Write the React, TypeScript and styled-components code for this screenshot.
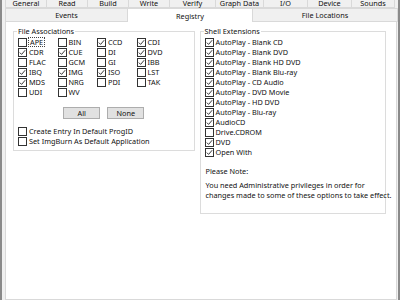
import React from 'react';
import styled, { createGlobalStyle } from 'styled-components';

const GlobalStyle = createGlobalStyle`
  html, body {
    margin: 0;
    padding: 0;
    overflow: hidden;
    background: #f0f0f0;
  }
  body {
    font-family: "Noto Sans", "Liberation Sans", sans-serif;
    font-size: 7.3px;
    color: #111;
  }
`;

const Window = styled.div`
  width: 400px;
  height: 300px;
  box-sizing: border-box;
  display: flex;
  flex-direction: column;
  background: #f0f0f0;
  border-left: 2px solid #8a8a8a;
  border-right: 2px solid #8a8a8a;
  padding-left: 3px;
  overflow: hidden;
`;

const TabRow = styled.div<{ $top?: number }>`
  display: flex;
  height: 14px;
  margin-top: ${(p) => p.$top ?? 0}px;
  flex-shrink: 0;
`;

const Tab = styled.div<{ $w: number; $active?: boolean; $low?: boolean }>`
  width: ${(p) => p.$w}px;
  box-sizing: border-box;
  display: flex;
  align-items: ${(p) => (p.$low ? 'flex-end' : 'center')};
  justify-content: center;
  line-height: ${(p) => (p.$low ? '7px' : 'normal')};
  background: ${(p) => (p.$active ? '#ffffff' : '#f0f0f0')};
  border: 1px solid #d9d9d9;
  border-bottom: ${(p) => (p.$active ? 'none' : '1px solid #d9d9d9')};
  margin-left: -1px;
  white-space: nowrap;
  &:first-child {
    margin-left: 0;
  }
`;

const Page = styled.div`
  flex: 1;
  display: flex;
  align-items: flex-start;
  gap: 5px;
  background: #ffffff;
  border: 1px solid #d9d9d9;
  border-top: none;
  margin-right: 1px;
  padding: 4px 10px 0 7px;
`;

const Group = styled.fieldset<{ $w: number; $pb: number }>`
  width: ${(p) => p.$w}px;
  box-sizing: border-box;
  margin: 0;
  min-width: 0;
  border: 1px solid #dcdcdc;
  padding: 0 4px ${(p) => p.$pb}px 4px;
`;

const Legend = styled.legend`
  padding: 0 1px;
  margin-left: -1px;
  line-height: 10px;
  font-size: 7.3px;
`;

const AssocGrid = styled.div`
  display: grid;
  grid-template-columns: repeat(4, 39.5px);
  grid-auto-rows: 10px;
  margin-top: 1px;
`;

const Item = styled.label`
  display: flex;
  align-items: center;
  gap: 2px;
  height: 10px;
  line-height: 10px;
  white-space: nowrap;
`;

const Box = styled.span`
  width: 9px;
  height: 9px;
  box-sizing: border-box;
  border: 1px solid #333;
  background: #fff;
  display: inline-flex;
  flex-shrink: 0;
`;

const Text = styled.span<{ $focus?: boolean }>`
  outline: ${(p) => (p.$focus ? '1px dotted #444' : 'none')};
  outline-offset: 0;
  padding: 0 ${(p) => (p.$focus ? '1px' : '0')};
  line-height: 8px;
`;

const Buttons = styled.div`
  display: flex;
  justify-content: center;
  gap: 7px;
  margin: 10px 0 7px;
`;

const Button = styled.button`
  width: 37px;
  height: 12px;
  padding: 0;
  font: inherit;
  color: #111;
  background: #e1e1e1;
  border: 1px solid #adadad;
`;

const List = styled.div`
  display: flex;
  flex-direction: column;
  margin-top: 1px;
`;

const Note = styled.p<{ $mt: number }>`
  margin: ${(p) => p.$mt}px 0 0 1px;
  line-height: 10px;
  white-space: nowrap;
`;

const Check = ({ checked, label, focus }: { checked?: boolean; label: string; focus?: boolean }) => (
  <Item>
    <Box>
      {checked && (
        <svg width="7" height="7" viewBox="0 0 7 7">
          <polyline points="0.8,3.6 2.6,5.4 6.2,1.2" fill="none" stroke="#222" strokeWidth="0.9" />
        </svg>
      )}
    </Box>
    <Text $focus={focus}>{label}</Text>
  </Item>
);

const topTabs: [string, number][] = [
  ['General', 42],
  ['Read', 42],
  ['Build', 42],
  ['Write', 42],
  ['Verify', 47],
  ['Graph Data', 49],
  ['I/O', 45],
  ['Device', 45],
  ['Sounds', 44],
];

const assoc: [string, boolean][] = [
  ['APE', false], ['BIN', false], ['CCD', true], ['CDI', true],
  ['CDR', true], ['CUE', true], ['DI', false], ['DVD', true],
  ['FLAC', false], ['GCM', false], ['GI', false], ['IBB', true],
  ['IBQ', true], ['IMG', true], ['ISO', true], ['LST', false],
  ['MDS', true], ['NRG', false], ['PDI', false], ['TAK', false],
  ['UDI', false], ['WV', false],
];

const shell: [string, boolean][] = [
  ['AutoPlay - Blank CD', true],
  ['AutoPlay - Blank DVD', true],
  ['AutoPlay - Blank HD DVD', true],
  ['AutoPlay - Blank Blu-ray', true],
  ['AutoPlay - CD Audio', true],
  ['AutoPlay - DVD Movie', true],
  ['AutoPlay - HD DVD', true],
  ['AutoPlay - Blu-ray', true],
  ['AudioCD', true],
  ['Drive.CDROM', false],
  ['DVD', true],
  ['Open With', true],
];

export default function App() {
  return (
    <>
      <GlobalStyle />
      <Window>
        <TabRow $top={-6}>
          {topTabs.map(([t, w]) => (
            <Tab key={t} $w={w} $low>{t}</Tab>
          ))}
        </TabRow>
        <TabRow>
          <Tab $w={123}>Events</Tab>
          <Tab $w={126} $active>Registry</Tab>
          <Tab $w={146}>File Locations</Tab>
        </TabRow>
        <Page>
          <Group $w={182} $pb={4}>
            <Legend>File Associations</Legend>
            <AssocGrid>
              {assoc.map(([n, c], i) => (
                <Check key={n} label={n} checked={c} focus={i === 0} />
              ))}
            </AssocGrid>
            <Buttons>
              <Button>All</Button>
              <Button>None</Button>
            </Buttons>
            <Check label="Create Entry In Default ProgID" />
            <Check label="Set ImgBurn As Default Application" />
          </Group>
          <Group $w={187} $pb={13}>
            <Legend>Shell Extensions</Legend>
            <List>
              {shell.map(([n, c]) => (
                <Check key={n} label={n} checked={c} />
              ))}
            </List>
            <Note $mt={9}>Please Note:</Note>
            <Note $mt={4}>
              You need Administrative privileges in order for
              <br />
              changes made to some of these options to take effect.
            </Note>
          </Group>
        </Page>
      </Window>
    </>
  );
}
